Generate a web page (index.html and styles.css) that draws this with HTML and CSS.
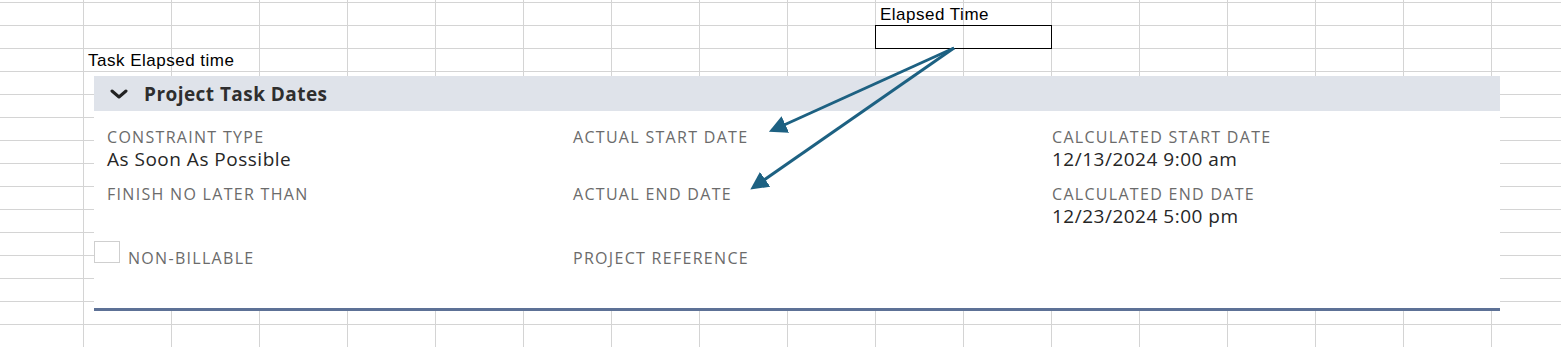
FILE: index.html
```html
<!DOCTYPE html>
<html lang="en">
<head>
<meta charset="utf-8">
<title>Task Elapsed time</title>
<link rel="stylesheet" href="styles.css">
</head>
<body>
<div class="sheet">

  <!-- sheet cells -->
  <span class="cell-text task-label">Task Elapsed time</span>
  <span class="cell-text elapsed-label">Elapsed Time</span>
  <div class="elapsed-box"></div>

  <!-- pasted record panel -->
  <section class="panel">
    <header class="panel-head">
      <svg class="chev" width="18" height="10" viewBox="0 0 18 10"><path d="M2 2 L9 8 L16 2" fill="none" stroke="#222" stroke-width="3" stroke-linecap="round" stroke-linejoin="round"/></svg>
      <h2>Project Task Dates</h2>
    </header>
    <div class="panel-body">
      <div class="field">
        <div class="label">Constraint Type</div>
        <div class="value">As Soon As Possible</div>
      </div>
      <div class="field">
        <div class="label">Actual Start Date</div>
        <div class="value"></div>
      </div>
      <div class="field">
        <div class="label">Calculated Start Date</div>
        <div class="value">12/13/2024 9:00 am</div>
      </div>

      <div class="field">
        <div class="label">Finish No Later Than</div>
        <div class="value"></div>
      </div>
      <div class="field">
        <div class="label">Actual End Date</div>
        <div class="value"></div>
      </div>
      <div class="field">
        <div class="label">Calculated End Date</div>
        <div class="value">12/23/2024 5:00 pm</div>
      </div>

      <div class="field check-field">
        <span class="checkbox"></span>
        <div class="label">Non-Billable</div>
      </div>
      <div class="field last-row">
        <div class="label">Project Reference</div>
      </div>
      <div class="field last-row"></div>
    </div>
  </section>

  <!-- annotation arrows -->
  <svg class="arrows" width="1561" height="347" viewBox="0 0 1561 347">
    <defs>
      <marker id="head" markerWidth="6" markerHeight="6" refX="4.5" refY="3" orient="auto" markerUnits="strokeWidth">
        <path d="M0 0 L6 3 L0 6 Z" fill="#1d6182"/>
      </marker>
    </defs>
    <line x1="954" y1="48" x2="773" y2="130" stroke="#1d6182" stroke-width="3" marker-end="url(#head)"/>
    <line x1="954" y1="48" x2="754" y2="187" stroke="#1d6182" stroke-width="3" marker-end="url(#head)"/>
  </svg>
</div>
</body>
</html>
```
FILE: styles.css
```css
*,*::before,*::after{box-sizing:border-box;margin:0;padding:0}
html,body{width:100%;height:100%;background:#fff;overflow:hidden}

/* ==== spreadsheet ==== */
.sheet{
  position:relative;width:1561px;height:347px;
  background-color:#fff;
  background-image:
    linear-gradient(to right,#d4d4d4 1px,transparent 1px),
    linear-gradient(to bottom,#d4d4d4 1px,transparent 1px);
  background-size:88px 23px;
  background-position:83px 2px;
  font-family:"Liberation Sans",Arial,sans-serif;
}
.cell-text{position:absolute;font-size:17px;line-height:18px;letter-spacing:.5px;color:#000;white-space:nowrap}
.task-label{left:88px;top:52px}
.elapsed-label{left:880px;top:6px}
.elapsed-box{position:absolute;left:875px;top:25px;width:177px;height:24px;border:1px solid #000}

/* ==== panel ==== */
.panel{
  position:absolute;left:94px;top:76px;width:1406px;height:235px;
  background:#fff;border-bottom:3px solid #5d7196;
  font-family:"Open Sans","Noto Sans",sans-serif;
}
.panel-head{
  height:35px;background:#dfe3ea;
  display:flex;align-items:center;gap:16px;padding-left:16px;
}
.chev{display:block}
.panel-head h2{font-size:19px;font-weight:700;color:#2e2e2e;letter-spacing:.45px}

.panel-body{
  display:grid;grid-template-columns:466px 479px 1fr;
  row-gap:13px;padding:16px 0 0 13px;
}
.label{font-size:16px;line-height:20px;color:#6b6b6b;text-transform:uppercase;letter-spacing:1.3px}
.value{font-size:19px;line-height:24px;color:#262626;min-height:24px;letter-spacing:.5px}

.check-field{display:flex;align-items:flex-start;gap:8px;margin-left:-13px}
.check-field .label{margin-top:7px}
.last-row .label{margin-top:7px}
.checkbox{width:26px;height:22px;border:1px solid #cfcfcf;background:#fff}

/* ==== arrows ==== */
.arrows{position:absolute;left:0;top:0;pointer-events:none}
```
